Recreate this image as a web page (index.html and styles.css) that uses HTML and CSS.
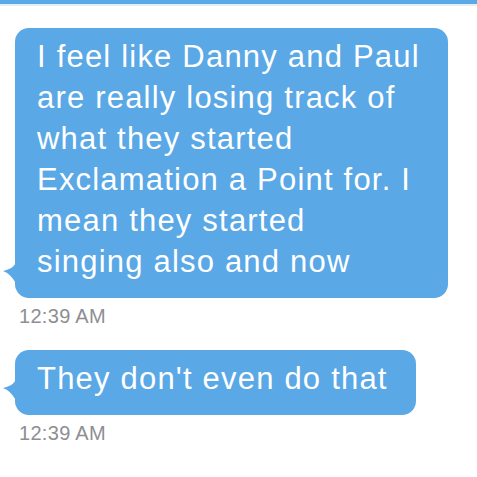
FILE: index.html
```html
<!DOCTYPE html>
<html lang="en">
<head>
    <meta charset="UTF-8">
    <title>Messages</title>
    <link rel="stylesheet" href="styles.css">
</head>
<body>
<div class="top-bar"></div>

<div class="thread">
    <div class="message">
        <div class="bubble">
            I feel like Danny and Paul<br>
            are really losing track of<br>
            what they started<br>
            Exclamation a Point for. I<br>
            mean they started<br>
            singing also and now
            <svg class="tail" width="16" height="26" viewBox="0 0 16 26">
                <path d="M16 0 C15 7 10 10 2 12 C8 14 12 19 16 26 Z" fill="#5aa8e6"/>
            </svg>
        </div>
        <div class="time">12:39 AM</div>
    </div>
    <div class="message">
        <div class="bubble">
            They don't even do that
            <svg class="tail" width="16" height="26" viewBox="0 0 16 26">
                <path d="M16 0 C15 7 10 10 2 12 C8 14 12 19 16 26 Z" fill="#5aa8e6"/>
            </svg>
        </div>
        <div class="time">12:39 AM</div>
    </div>
</div>
</body>
</html>
```

FILE: styles.css
```css
* {
    box-sizing: border-box;
}
body {
    font-family: "Liberation Sans", Arial, Helvetica, sans-serif;
    margin: 0;
    background: #fff;
}

.top-bar {
    height: 6px;
    background: #5aa8e6;
    border-bottom: 2px solid #e4eef7;
}

.thread {
    padding: 22px 0 0 15px;
}

.message {
    display: flex;
    flex-direction: column;
    align-items: flex-start;
    margin-bottom: 22px;
}

.bubble {
    position: relative;
    background: #5aa8e6;
    color: #fff;
    font-size: 31px;
    line-height: 41px;
    letter-spacing: 1.2px;
    padding: 8px 28px 16px 22px;
    border-radius: 14px;
}

.tail {
    position: absolute;
    left: -14px;
    bottom: 13px;
}

.time {
    color: #8e8e93;
    font-size: 20px;
    letter-spacing: 0.3px;
    margin: 7px 0 0 4px;
}
```
